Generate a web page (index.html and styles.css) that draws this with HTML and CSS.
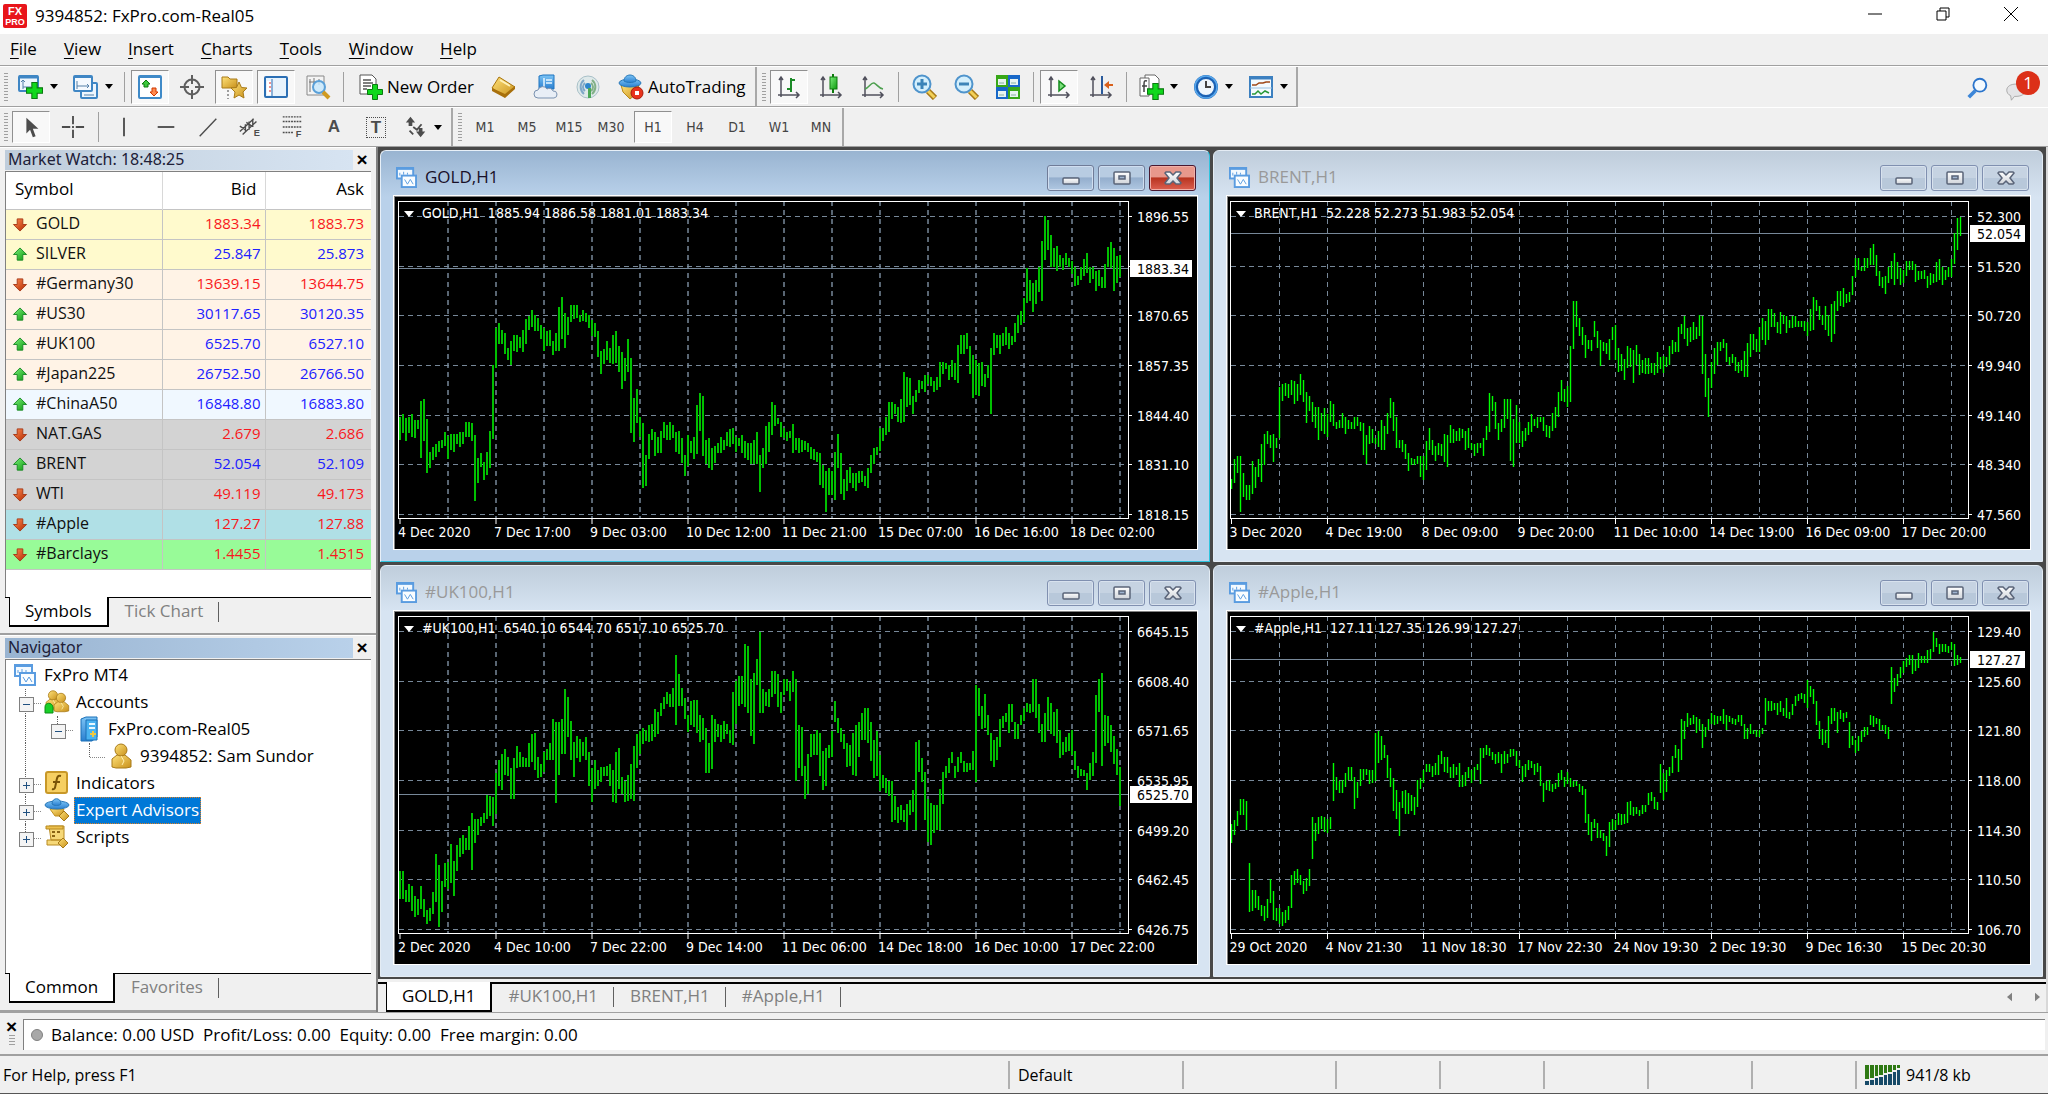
FILE: index.html
```html
<!DOCTYPE html>
<html lang="en">
<head>
<meta charset="utf-8">
<title>9394852: FxPro.com-Real05</title>
<link rel="stylesheet" href="styles.css">
</head>
<body>
<svg class="sprite" aria-hidden="true">
  <defs>
    <linearGradient id="gBlue" x1="0" y1="0" x2="0" y2="1"><stop offset="0" stop-color="#7cc4f5"/><stop offset="1" stop-color="#2a7fd0"/></linearGradient>
    <linearGradient id="gGold" x1="0" y1="0" x2="1" y2="1"><stop offset="0" stop-color="#ffe27a"/><stop offset="1" stop-color="#c8901a"/></linearGradient>
    <linearGradient id="gGreen" x1="0" y1="0" x2="1" y2="1"><stop offset="0" stop-color="#7df07d"/><stop offset="1" stop-color="#0c9a0c"/></linearGradient>
    <linearGradient id="gRed" x1="0" y1="0" x2="1" y2="1"><stop offset="0" stop-color="#ff8a50"/><stop offset="1" stop-color="#b02800"/></linearGradient>
    <linearGradient id="gMetal" x1="0" y1="0" x2="0" y2="1"><stop offset="0" stop-color="#ffffff"/><stop offset="1" stop-color="#d0d4da"/></linearGradient>
  </defs>
  <symbol id="plus" viewBox="0 0 16 16"><path d="M5.500 .5h5v5h5v5h-5v5h-5v-5h-5v-5h5z" fill="#10d81c" stroke="#0a7a10"/></symbol>
  <symbol id="new-chart" viewBox="0 0 26 26"><rect x="1" y="2" width="19" height="15" rx="1" fill="#eef6fd" stroke="#3f86c4" stroke-width="2"/><path d="M1 3h19" stroke="#3f86c4" stroke-width="3"/><path d="M5 6v9M3 8l2-2 2 2M5 13h8" stroke="#5580a8" fill="none"/><use href="#plus" x="8" y="8" width="17" height="17"/></symbol>
  <symbol id="profiles" viewBox="0 0 26 26"><rect x="8" y="9" width="16" height="15" rx="1" fill="#eef6fd" stroke="#3f86c4" stroke-width="2"/><path d="M11 21h10" stroke="#5580a8"/><rect x="1" y="2" width="18" height="15" rx="1" fill="#f4f9fe" stroke="#3f86c4" stroke-width="2"/><path d="M1 3h18" stroke="#3f86c4" stroke-width="2"/><path d="M4 7v8M4 12h12M14 10l2 2-2 2" stroke="#5580a8" fill="none"/></symbol>
  <symbol id="market" viewBox="0 0 26 26"><rect x="2" y="2" width="22" height="22" rx="1" fill="#fff" stroke="#3f8ac8" stroke-width="2"/><path d="M2 3h22" stroke="#3f8ac8" stroke-width="2"/><path d="M9 6l4 4h-2v3H7v-3H5z" fill="#3cc83c" stroke="#0c7a0c"/><path d="M17 22l-4-4h2v-4h4v4h2z" fill="#ff8a50" stroke="#d03800"/></symbol>
  <symbol id="crosshair-box" viewBox="0 0 26 26"><g fill="none" stroke="#5e5e5e" stroke-width="2"><circle cx="13" cy="13" r="7.500"/><path d="M13 1v9M13 16v9M1 13h9M16 13h9"/></g></symbol>
  <symbol id="nav-star" viewBox="0 0 26 26"><path d="M1 3h6l2 2h7v9H1z" fill="url(#gGold)" stroke="#a87a18"/><path d="M7 16v9" stroke="#444" stroke-dasharray="2 2"/><path d="M18 8l2.500 5.500 5.500.5-4 4 1 6-5-3-5 3 1-6-4-4 5.500-.5z" fill="url(#gGold)" stroke="#a87a18"/></symbol>
  <symbol id="data-window" viewBox="0 0 26 26"><rect x="2" y="3" width="22" height="20" rx="1" fill="#e8f3fc" stroke="#2c6fb4" stroke-width="2"/><path d="M4 7h4v14H4z" fill="#fff"/><path d="M6 9h2M6 13h2M6 17h2" stroke="#d22"/><path d="M9 5v17" stroke="#2c6fb4"/></symbol>
  <symbol id="tester" viewBox="0 0 26 26"><path d="M2 2h17v19H2z" fill="#f4f4f4" stroke="#888"/><path d="M5 5v13M9 4v8M14 5v6M4 8h13" stroke="#777"/><circle cx="14" cy="13" r="6" fill="#c8e8fb" fill-opacity=".85" stroke="#5aa0d8" stroke-width="2"/><path d="M18 18l6 6" stroke="#d09a20" stroke-width="4"/></symbol>
  <symbol id="new-order" viewBox="0 0 26 26"><path d="M3 1h12l4 4v15H3z" fill="#fff" stroke="#555"/><path d="M6 6h8M6 9h10M6 12h8M6 15h4" stroke="#555" stroke-width="1.500"/><use href="#plus" x="10" y="10" width="16" height="16"/></symbol>
  <symbol id="ingot" viewBox="0 0 26 26"><path d="M8 3l16 10-10 10L1 14z" fill="url(#gGold)" stroke="#a8740c"/><path d="M1 14l13 6 10-8v3L14 24 1 17z" fill="#a8700c"/><path d="M9 6l10 6" stroke="#fff2b8" stroke-width="2"/></symbol>
  <symbol id="server-cloud" viewBox="0 0 26 26"><path d="M6 2l4-1h11v14H6z" fill="url(#gBlue)" stroke="#1e74c0"/><path d="M11 4v9M13 6h6M13 9h6" stroke="#e8f6ff" stroke-width="1.500"/><path d="M5 24a4 4 0 0 1 0-8 5 5 0 0 1 9-1 4 4 0 0 1 6 2 3.500 3.500 0 0 1 1 7z" fill="#e8eef6" stroke="#7a92b0"/></symbol>
  <symbol id="signals" viewBox="0 0 26 26"><circle cx="13" cy="13" r="11" fill="#dfe9ea" stroke="#a8c0c8"/><g fill="none" stroke-width="2"><path d="M9 20a9 9 0 0 1 0-14M10 17a5 5 0 0 1 0-8" stroke="#7fa8c8"/><path d="M17 6a9 9 0 0 1 0 14M16 9a5 5 0 0 1 0 8" stroke="#82b088"/></g><circle cx="13" cy="12" r="3" fill="#2d86cc"/><path d="M13 14h3v10h-3z" fill="#4ca858"/></symbol>
  <symbol id="autotrade" viewBox="0 0 26 26"><path d="M3 11h18l-3 9-6 5-7-7z" fill="url(#gGold)" stroke="#b88818"/><ellipse cx="12" cy="9" rx="11" ry="4" fill="url(#gBlue)" stroke="#2878b8"/><path d="M6 7c0-8 12-8 12 0-3 2-9 2-12 0z" fill="url(#gBlue)" stroke="#2878b8"/><circle cx="19" cy="19" r="6" fill="#e8331c" stroke="#a81c0c"/><path d="M17 17h4v4h-4z" fill="#fff"/></symbol>
  <symbol id="axes" viewBox="0 0 26 26"><path d="M5 3v20M2 21h21M3 6l2-3 2 3M20 18l3 3-3 3" fill="none" stroke="#50505c" stroke-width="1.500"/></symbol>
  <symbol id="bars" viewBox="0 0 26 26"><use href="#axes" width="26" height="26"/><path d="M15 4v14M15 6h4M11 15h4" stroke="#1c8a28" stroke-width="2"/></symbol>
  <symbol id="candles" viewBox="0 0 26 26"><use href="#axes" width="26" height="26"/><path d="M15 0v19" stroke="#0c7a0c" stroke-width="2"/><rect x="12" y="3" width="7" height="12" fill="url(#gGreen)" stroke="#0c7a0c"/></symbol>
  <symbol id="line" viewBox="0 0 26 26"><use href="#axes" width="26" height="26"/><path d="M5 15c4-1 6-7 9-6s4 5 9 6" fill="none" stroke="#4ea050" stroke-width="1.500"/></symbol>
  <symbol id="zoom-in" viewBox="0 0 26 26"><path d="M17 17l7 7" stroke="#a87a18" stroke-width="6"/><path d="M17 17l6.500 6.500" stroke="#f2d058" stroke-width="3"/><circle cx="11" cy="10" r="8.500" fill="#d4effc" stroke="#4f94cc" stroke-width="2"/><path d="M6 10h10M11 5v10" stroke="#3c84b8" stroke-width="3"/></symbol>
  <symbol id="zoom-out" viewBox="0 0 26 26"><path d="M17 17l7 7" stroke="#a87a18" stroke-width="6"/><path d="M17 17l6.500 6.500" stroke="#f2d058" stroke-width="3"/><circle cx="11" cy="10" r="8.500" fill="#d4effc" stroke="#4f94cc" stroke-width="2"/><path d="M6 10h10" stroke="#3c84b8" stroke-width="3"/></symbol>
  <symbol id="tile" viewBox="0 0 26 26"><path d="M1 1h12v12H1z" fill="#38a818"/><path d="M13 1h12v12H13z" fill="#1868c8"/><path d="M1 13h12v12H1z" fill="#1868c8"/><path d="M13 13h12v12H13z" fill="#38a818"/><path d="M3 5h8v6H3zM15 5h8v6h-8zM3 17h8v6H3zM15 17h8v6h-8z" fill="#e8f4f0"/><path d="M4 9h5M16 9h5M4 21h5M16 21h5" stroke="#88b0a0"/></symbol>
  <symbol id="autoscroll" viewBox="0 0 26 26"><use href="#axes" width="26" height="26"/><path d="M13 7l6 5-6 5z" fill="#7be07b" stroke="#128a1c" stroke-width="1.500"/></symbol>
  <symbol id="shift" viewBox="0 0 26 26"><use href="#axes" width="26" height="26"/><path d="M14 2v18" stroke="#2a5a9c" stroke-width="2"/><path d="M16 11l5-4v3h4v2h-4v3z" fill="#d8601c"/></symbol>
  <symbol id="indicators" viewBox="0 0 26 26"><path d="M7 1h10l4 4v14H7z" fill="#fff" stroke="#666"/><path d="M2 4h9v18H2z" fill="#fff" stroke="#666"/><path d="M9 7c-3-1-3 1-3 4v7M4 12h5" fill="none" stroke="#444" stroke-width="1.500"/><use href="#plus" x="9" y="9" width="17" height="17"/></symbol>
  <symbol id="clock" viewBox="0 0 26 26"><circle cx="13" cy="13" r="10" fill="#eef6fd" stroke="#1c62b4" stroke-width="4"/><circle cx="13" cy="13" r="11" fill="none" stroke="#58a8ec" stroke-width="1.500"/><path d="M13 7v6h5" fill="none" stroke="#444" stroke-width="2"/></symbol>
  <symbol id="template" viewBox="0 0 26 26"><rect x="2" y="3" width="22" height="20" fill="#f4fafe" stroke="#3c80c0" stroke-width="2"/><path d="M2 4h22" stroke="#3c80c0" stroke-width="3"/><path d="M2 14h22" stroke="#9ac0e0"/><path d="M4 11h4l3-2h4l3-1h4" fill="none" stroke="#a04818" stroke-width="1.500"/><path d="M4 20h3l3-3 3 3 4-3 4 2" fill="none" stroke="#289838" stroke-width="1.500"/></symbol>
  <symbol id="cursor" viewBox="0 0 26 26"><path d="M8 3v17l4-4 3 8 3-1-3-8h6z" fill="#4c4c4c"/></symbol>
  <symbol id="cross" viewBox="0 0 26 26"><path d="M13 1v9M13 16v9M1 13h9M16 13h9M13 12v2" stroke="#4c4c4c" stroke-width="2"/></symbol>
  <symbol id="vline" viewBox="0 0 26 26"><path d="M13 3v20" stroke="#4c4c4c" stroke-width="2"/></symbol>
  <symbol id="hline" viewBox="0 0 26 26"><path d="M4 13h18" stroke="#4c4c4c" stroke-width="2"/></symbol>
  <symbol id="trend" viewBox="0 0 26 26"><path d="M4 23L22 4" stroke="#4c4c4c" stroke-width="1.500"/></symbol>
  <symbol id="arrows" viewBox="0 0 26 26"><path d="M7 2l5 6h-3v4H5V8H2zM18 24l-5-6h3v-4h4v4h3z" fill="#4c4c4c"/><path d="M6 17l4 4M10 13l4 3 5-6" fill="none" stroke="#4c4c4c" stroke-width="2"/></symbol>
  <symbol id="search" viewBox="0 0 26 26"><path d="M10 16l-7 7" stroke="#3c86d8" stroke-width="4"/><circle cx="15" cy="10" r="7" fill="#f4faff" stroke="#2a74cc" stroke-width="2"/></symbol>
  <symbol id="bubble" viewBox="0 0 26 26"><path d="M13 4c7 0 12 3 12 8s-5 8-12 8h-2l-4 5-1-6c-3-1-5-4-5-7 0-5 5-8 12-8z" fill="#e4e4e6" stroke="#999"/></symbol>
  <symbol id="chart-doc" viewBox="0 0 22 22"><rect x="1" y="1" width="17" height="11" fill="#f4faff" stroke="#5a9ce0" stroke-width="2"/><path d="M1 2h17" stroke="#5a9ce0" stroke-width="2"/><path d="M4 9V6M8 8V5M12 8V6" stroke="#5a9ce0"/><rect x="6" y="9" width="15" height="12" fill="#fafdff" stroke="#5a9ce0" stroke-width="2"/><path d="M9 13l3 5 3-5 3 5" fill="none" stroke="#5a9ce0"/></symbol>
  <symbol id="up" viewBox="0 0 16 16"><path d="M8 1l7 7h-4v6H5V8H1z" fill="url(#gGreen)" stroke="#1c8a28"/></symbol>
  <symbol id="down" viewBox="0 0 16 16"><path d="M8 15l7-7h-4V2H5v6H1z" fill="url(#gRed)" stroke="#a83a18"/></symbol>
  <symbol id="person" viewBox="0 0 26 26"><path d="M4 24V16l5-4h8l6 5v7l-5 1H8z" fill="url(#gGold)" stroke="#a87a18"/><circle cx="13" cy="7" r="6" fill="url(#gGold)" stroke="#a87a18"/><path d="M13 13l3 5-2 4" fill="none" stroke="#fff0b0"/></symbol>
  <symbol id="people" viewBox="0 0 26 26"><use href="#person" x="-1" y="0" width="20" height="22"/><use href="#person" x="7" y="2" width="20" height="23"/><path d="M1 24v-6c0-5 7-5 8 0v6z" fill="#18d028" stroke="#0a8a14"/></symbol>
  <symbol id="server" viewBox="0 0 26 26"><path d="M5 3l5-2h11v20l-5 4H5z" fill="url(#gBlue)" stroke="#1a70b8"/><path d="M10 4h11v20H10z" fill="#4ab2f0" stroke="#1a70b8"/><path d="M13 8h6M13 12h6" stroke="#e8f8ff" stroke-width="2"/><path d="M16 15h2v2h2v2h-2v2h-2v-2h-2v-2h2z" fill="#f0c840"/></symbol>
  <symbol id="function" viewBox="0 0 26 26"><rect x="2" y="2" width="21" height="21" rx="2" fill="#f6cf62" stroke="#c89828" stroke-width="2"/><path d="M17 6c-4-1-4 2-5 7s-1 7-4 6M9 12h7" fill="none" stroke="#7a5408" stroke-width="2"/></symbol>
  <symbol id="expert" viewBox="0 0 26 26"><path d="M6 12h14l-3 7h-6z" fill="url(#gGold)" stroke="#c09020"/><ellipse cx="13" cy="8" rx="12" ry="4" fill="url(#gBlue)" stroke="#2878b8"/><path d="M8 7c0-7 9-7 9 0-2 2-7 2-9 0z" fill="url(#gBlue)" stroke="#2878b8"/><path d="M20 14l5 5-5 5-5-5z" fill="url(#gGold)" stroke="#a87a18"/></symbol>
  <symbol id="script" viewBox="0 0 26 26"><path d="M5 2h15v14H7zM3 16h15v5H3z" fill="#f6d878" stroke="#b88a20"/><path d="M2 2h17v3H2z" fill="#ecc04c" stroke="#b88a20"/><path d="M8 8h3M13 8h3M8 12h3" stroke="#8a6414" stroke-width="2"/><path d="M19 14l5 5-5 5-5-5z" fill="url(#gGold)" stroke="#a87a18"/></symbol>
  <symbol id="w-min" viewBox="0 0 18 14"><rect x="1" y="7" width="16" height="6" rx="1" fill="url(#gMetal)" stroke="#5a6478" stroke-width="1.500"/></symbol>
  <symbol id="w-max" viewBox="0 0 18 14"><rect x="1" y="1" width="16" height="12" rx="1" fill="url(#gMetal)" stroke="#5a6478" stroke-width="1.500"/><rect x="6" y="5" width="6" height="3" fill="#9fb4d0" stroke="#5a6478" stroke-width="1.500"/></symbol>
  <symbol id="w-close" viewBox="0 0 18 14"><path d="M2 1h4l3 3 3-3h4l1 1-4 5 4 5-1 1h-4l-3-3-3 3H2l-1-1 4-5-4-5z" fill="url(#gMetal)" stroke="#5a6478" stroke-width="1.500"/></symbol>
</svg>

<header class="titlebar">
  <svg class="logo" viewBox="0 0 24 24"><rect width="24" height="24" rx="2" fill="#e8151b"/><text x="12" y="11" class="logo-big">FX</text><text x="12" y="21" class="logo-small">PRO</text></svg>
  <h1>9394852: FxPro.com-Real05</h1>
  <div class="syscontrols">
    <button aria-label="Minimize"><svg viewBox="0 0 16 16"><path d="M1 8h14"/></svg></button>
    <button aria-label="Restore"><svg viewBox="0 0 16 16"><path d="M2 5h9v9H2zM5 5V2h9v9h-3"/></svg></button>
    <button aria-label="Close"><svg viewBox="0 0 16 16"><path d="M1 1l14 14M15 1L1 15"/></svg></button>
  </div>
</header>

<nav class="menubar">
  <button><u>F</u>ile</button><button><u>V</u>iew</button><button><u>I</u>nsert</button><button><u>C</u>harts</button><button><u>T</u>ools</button><button><u>W</u>indow</button><button><u>H</u>elp</button>
</nav>

<div class="toolrow">
  <div class="toolbar">
    <span class="grip"></span>
    <button class="tool drop" aria-label="New chart"><svg><use href="#new-chart"/></svg></button>
    <button class="tool drop" aria-label="Profiles"><svg><use href="#profiles"/></svg></button>
    <span class="sep"></span>
    <button class="tool on" aria-label="Market Watch"><svg><use href="#market"/></svg></button>
    <button class="tool" aria-label="Data window"><svg><use href="#crosshair-box"/></svg></button>
    <button class="tool on" aria-label="Navigator"><svg><use href="#nav-star"/></svg></button>
    <button class="tool on" aria-label="Terminal"><svg><use href="#data-window"/></svg></button>
    <button class="tool" aria-label="Strategy tester"><svg><use href="#tester"/></svg></button>
    <span class="sep"></span>
    <button class="tool wide"><svg><use href="#new-order"/></svg>New Order</button>
    <button class="tool" aria-label="MetaEditor"><svg><use href="#ingot"/></svg></button>
    <button class="tool" aria-label="Hosting"><svg><use href="#server-cloud"/></svg></button>
    <button class="tool" aria-label="Signals"><svg><use href="#signals"/></svg></button>
    <button class="tool wide"><svg><use href="#autotrade"/></svg>AutoTrading</button>
  </div>
  <div class="toolbar">
    <span class="grip"></span>
    <button class="tool on" aria-label="Bar chart"><svg><use href="#bars"/></svg></button>
    <button class="tool" aria-label="Candlesticks"><svg><use href="#candles"/></svg></button>
    <button class="tool" aria-label="Line chart"><svg><use href="#line"/></svg></button>
    <span class="sep"></span>
    <button class="tool" aria-label="Zoom in"><svg><use href="#zoom-in"/></svg></button>
    <button class="tool" aria-label="Zoom out"><svg><use href="#zoom-out"/></svg></button>
    <button class="tool" aria-label="Tile windows"><svg><use href="#tile"/></svg></button>
    <span class="sep"></span>
    <button class="tool on" aria-label="Auto scroll"><svg><use href="#autoscroll"/></svg></button>
    <button class="tool" aria-label="Chart shift"><svg><use href="#shift"/></svg></button>
    <span class="sep"></span>
    <button class="tool drop" aria-label="Indicators"><svg><use href="#indicators"/></svg></button>
    <button class="tool drop" aria-label="Periods"><svg><use href="#clock"/></svg></button>
    <button class="tool drop" aria-label="Templates"><svg><use href="#template"/></svg></button>
  </div>
  <div class="quick">
    <button aria-label="Search"><svg><use href="#search"/></svg></button>
    <button class="notify" aria-label="Notifications"><svg><use href="#bubble"/></svg><span class="badge">1</span></button>
  </div>
</div>

<div class="toolrow second">
  <div class="toolbar">
    <span class="grip"></span>
    <button class="tool on" aria-label="Cursor"><svg><use href="#cursor"/></svg></button>
    <button class="tool" aria-label="Crosshair"><svg><use href="#cross"/></svg></button>
    <span class="sep"></span>
    <button class="tool" aria-label="Vertical line"><svg><use href="#vline"/></svg></button>
    <button class="tool" aria-label="Horizontal line"><svg><use href="#hline"/></svg></button>
    <button class="tool" aria-label="Trendline"><svg><use href="#trend"/></svg></button>
    <button class="tool" aria-label="Channel"><svg viewBox="0 0 26 26"><path d="M2 18L17 4M5 21L20 7M8 10v9M12 7v9M16 4v9M2 12l6 4M9 8l6 4" stroke="#4c4c4c" stroke-width="1.500"/><text x="17" y="23" class="icon-letter">E</text></svg></button>
    <button class="tool" aria-label="Fibonacci"><svg viewBox="0 0 26 26"><path d="M3 2h20M3 7h20M3 13h20M3 19h12" stroke="#4c4c4c" stroke-width="1.500" stroke-dasharray="2 1"/><text x="17" y="24" class="icon-letter">F</text></svg></button>
    <button class="tool" aria-label="Text"><span class="icon-char">A</span></button>
    <button class="tool" aria-label="Text label"><span class="icon-char boxed">T</span></button>
    <button class="tool drop" aria-label="Arrows"><svg><use href="#arrows"/></svg></button>
  </div>
  <div class="toolbar">
    <span class="grip"></span>
    <button class="tool">M1</button><button class="tool">M5</button><button class="tool">M15</button><button class="tool">M30</button><button class="tool on">H1</button><button class="tool">H4</button><button class="tool">D1</button><button class="tool">W1</button><button class="tool">MN</button>
  </div>
</div>

<main class="workspace">
  <aside class="docks">
    <section class="dock">
      <header class="dock-head idle"><h2>Market Watch: 18:48:25</h2><button aria-label="Close">×</button></header>
      <div class="dock-body">
        <table class="quotes">
          <thead><tr><th>Symbol</th><th>Bid</th><th>Ask</th></tr></thead>
          <tbody>
            <tr class="metal down"><td><svg><use href="#down"/></svg>GOLD</td><td>1883.34</td><td>1883.73</td></tr>
            <tr class="metal up"><td><svg><use href="#up"/></svg>SILVER</td><td>25.847</td><td>25.873</td></tr>
            <tr class="index down"><td><svg><use href="#down"/></svg>#Germany30</td><td>13639.15</td><td>13644.75</td></tr>
            <tr class="index up"><td><svg><use href="#up"/></svg>#US30</td><td>30117.65</td><td>30120.35</td></tr>
            <tr class="index up"><td><svg><use href="#up"/></svg>#UK100</td><td>6525.70</td><td>6527.10</td></tr>
            <tr class="index up"><td><svg><use href="#up"/></svg>#Japan225</td><td>26752.50</td><td>26766.50</td></tr>
            <tr class="china up"><td><svg><use href="#up"/></svg>#ChinaA50</td><td>16848.80</td><td>16883.80</td></tr>
            <tr class="energy down"><td><svg><use href="#down"/></svg>NAT.GAS</td><td>2.679</td><td>2.686</td></tr>
            <tr class="energy up"><td><svg><use href="#up"/></svg>BRENT</td><td>52.054</td><td>52.109</td></tr>
            <tr class="energy down"><td><svg><use href="#down"/></svg>WTI</td><td>49.119</td><td>49.173</td></tr>
            <tr class="us down"><td><svg><use href="#down"/></svg>#Apple</td><td>127.27</td><td>127.88</td></tr>
            <tr class="uk down"><td><svg><use href="#down"/></svg>#Barclays</td><td>1.4455</td><td>1.4515</td></tr>
          </tbody>
        </table>
      </div>
      <div class="tabs"><button class="active">Symbols</button><button>Tick Chart</button></div>
    </section>
    <section class="dock grow">
      <header class="dock-head"><h2>Navigator</h2><button aria-label="Close">×</button></header>
      <div class="dock-body">
        <ul class="tree">
          <li><svg><use href="#chart-doc"/></svg><span>FxPro MT4</span></li>
          <li><i class="guide v node minus"></i><svg><use href="#people"/></svg><span>Accounts</span></li>
          <li><i class="guide v"></i><i class="guide half node minus"></i><svg><use href="#server"/></svg><span>FxPro.com-Real05</span></li>
          <li><i class="guide v"></i><i class="guide"></i><i class="guide half elbow"></i><svg><use href="#person"/></svg><span>9394852: Sam Sundor</span></li>
          <li><i class="guide v node plus"></i><svg><use href="#function"/></svg><span>Indicators</span></li>
          <li><i class="guide v node plus"></i><svg><use href="#expert"/></svg><span class="selected">Expert Advisors</span></li>
          <li><i class="guide half node plus"></i><svg><use href="#script"/></svg><span>Scripts</span></li>
        </ul>
      </div>
      <div class="tabs"><button class="active">Common</button><button>Favorites</button></div>
    </section>
  </aside>

  <section class="desk">
    <div class="mdi">
      <article class="window active">
        <header><svg class="doc"><use href="#chart-doc"/></svg><h2>GOLD,H1</h2><div class="wbtns"><button aria-label="Minimize"><svg><use href="#w-min"/></svg></button><button aria-label="Maximize"><svg><use href="#w-max"/></svg></button><button class="x" aria-label="Close"><svg><use href="#w-close"/></svg></button></div></header>
        <div class="chart wide" data-series="gold"></div>
      </article>
      <article class="window">
        <header><svg class="doc"><use href="#chart-doc"/></svg><h2>BRENT,H1</h2><div class="wbtns"><button aria-label="Minimize"><svg><use href="#w-min"/></svg></button><button aria-label="Maximize"><svg><use href="#w-max"/></svg></button><button class="x" aria-label="Close"><svg><use href="#w-close"/></svg></button></div></header>
        <div class="chart" data-series="brent"></div>
      </article>
      <article class="window">
        <header><svg class="doc"><use href="#chart-doc"/></svg><h2>#UK100,H1</h2><div class="wbtns"><button aria-label="Minimize"><svg><use href="#w-min"/></svg></button><button aria-label="Maximize"><svg><use href="#w-max"/></svg></button><button class="x" aria-label="Close"><svg><use href="#w-close"/></svg></button></div></header>
        <div class="chart wide" data-series="uk"></div>
      </article>
      <article class="window">
        <header><svg class="doc"><use href="#chart-doc"/></svg><h2>#Apple,H1</h2><div class="wbtns"><button aria-label="Minimize"><svg><use href="#w-min"/></svg></button><button aria-label="Maximize"><svg><use href="#w-max"/></svg></button><button class="x" aria-label="Close"><svg><use href="#w-close"/></svg></button></div></header>
        <div class="chart" data-series="apple"></div>
      </article>
    </div>
    <div class="tabs chart-tabs">
      <button class="active">GOLD,H1</button><button>#UK100,H1</button><button>BRENT,H1</button><button>#Apple,H1</button>
      <span class="scrollers"><button aria-label="Scroll left"><svg viewBox="0 0 6 10"><path d="M6 0v10L0 5z"/></svg></button><button aria-label="Scroll right"><svg viewBox="0 0 6 10"><path d="M0 0v10l6-5z"/></svg></button></span>
    </div>
  </section>
</main>

<section class="terminal">
  <div class="terminal-side"><button aria-label="Close">×</button><span class="mini-grip"></span></div>
  <p><i class="dot"></i><span>Balance: 0.00 USD&nbsp; Profit/Loss: 0.00&nbsp; Equity: 0.00&nbsp; Free margin: 0.00</span></p>
</section>

<footer class="status">
  <span class="help">For Help, press F1</span>
  <span class="profile">Default</span>
  <span class="c1"></span><span class="c2"></span><span class="c2"></span><span class="c2"></span><span class="c2"></span><span class="c2"></span>
  <span class="traffic"><svg viewBox="0 0 36 20"><g fill="#2f7a14"><path d="M0 0h4v14H0zM5 0h4v13H5zM10 0h3v11h-3zM14 0h4v10h-4zM19 0h3v8h-3zM23 0h4v7h-4zM28 0h3v5h-3zM32 0h3v3h-3z"/></g><g fill="#174a68"><path d="M0 16h4v4H0zM5 15h4v5H5zM10 13h3v7h-3zM14 12h4v8h-4zM19 10h3v10h-3zM23 9h4v11h-4zM28 7h3v13h-3zM32 5h3v15h-3z"/></g></svg>941/8 kb</span>
</footer>
<script src="charts.js"></script>
</body>
</html>
```
FILE: styles.css
```css
* { box-sizing: border-box; }
html, body { height: 100%; }
body {
  margin: 0;
  display: flex;
  flex-direction: column;
  background: #f0f0f0;
  color: #000;
  font: 17px/20px "Open Sans", "Noto Sans", sans-serif;
  overflow: hidden;
  border-bottom: 1px solid #555;
}
button { font: inherit; color: inherit; background: none; border: 0; padding: 0; margin: 0; }
h1, h2, p, ul { margin: 0; padding: 0; font: inherit; }
.sprite { position: absolute; width: 0; height: 0; }
.icon-letter { font: bold 10px "Liberation Sans", sans-serif; fill: #4c4c4c; }
.icon-char { font: bold 17px/20px "Liberation Sans", sans-serif; color: #4c4c4c; }
.boxed { width: 20px; height: 21px; border: 1px dotted #4c4c4c; }

/* title and menu */
.titlebar { display: flex; align-items: center; gap: 8px; flex: 0 0 34px; background: #fff; padding: 0 3px 2px; }
.logo { width: 24px; height: 24px; }
.logo-big, .logo-small { font: bold 11px "Liberation Sans", sans-serif; fill: #fff; text-anchor: middle; }
.logo-small { font-size: 9px; }
.syscontrols { margin-left: auto; display: flex; }
.syscontrols button { width: 68px; height: 32px; }
.syscontrols svg { width: 16px; height: 16px; fill: none; stroke: #000; stroke-width: 1; }
.menubar { display: flex; gap: 27px; flex: 0 0 32px; padding: 0 0 2px 10px; align-items: center; border-bottom: 1px solid #a0a0a0; }
.menubar u { text-underline-offset: 3px; }

/* toolbars */
.toolrow { display: flex; flex: 0 0 41px; border-top: 1px solid #fff; }
.toolbar { display: flex; align-items: center; height: 40px; padding-left: 4px; border-right: 2px solid #a8a8a8; border-bottom: 1px solid #a0a0a0; box-shadow: 0 1px #fff; }
.toolbar + .toolbar { padding-left: 5px; }
.second { flex-basis: 40px; border-bottom: 1px solid #a0a0a0; }
.second .toolbar { border-bottom: 0; height: 38px; box-shadow: none; padding-right: 2px; }
.second .toolbar + .toolbar { padding-right: 0; }
.grip { width: 4px; height: 28px; margin-right: 2px; background: repeating-linear-gradient(#a0a0a0 0 1px, #f0f0f0 1px 3px); }
.sep { width: 1px; height: 30px; background: #a0a0a0; margin: 0 4px; }
.tool { display: flex; align-items: center; justify-content: center; width: 38px; height: 34px; margin: 0 2px; white-space: nowrap; }
.tool svg { width: 26px; height: 26px; flex: none; }
.tool.on { background: #f8f8f8; border: 1px solid; border-color: #909090 #fff #fff #909090; }
.tool.wide { width: auto; gap: 4px; padding: 0 7px; }
.tool.drop { width: 51px; gap: 6px; }
.tool.drop::after { content: ""; border: 4px solid transparent; border-top: 5px solid #000; border-bottom: 0; }
.second .tool { height: 32px; font: 14px "DejaVu Sans Condensed", "Noto Sans", sans-serif; color: #444; }
.second .tool svg { width: 24px; height: 24px; }
.second .tool.drop { width: 48px; }
.quick { margin-left: auto; display: flex; gap: 16px; padding: 6px 8px 0 0; }
.quick svg { width: 24px; height: 24px; }
.notify { position: relative; width: 34px; text-align: left; }
.notify svg { width: 20px; margin-top: 6px; }
.badge { position: absolute; right: 0; top: -2px; width: 24px; height: 24px; border-radius: 12px; background: #dc3018; color: #fff; text-align: center; line-height: 24px; }

/* docked panels */
.workspace { flex: 1; display: flex; min-height: 0; }
.docks { display: flex; flex-direction: column; width: 378px; border-right: 2px solid #808080; }
.dock { display: flex; flex-direction: column; padding: 2px 5px 6px 5px; border-bottom: 2px solid #a0a0a0; border-top: 1px solid #fff; }
.dock.grow { flex: 1; padding-bottom: 7px; }
.dock-head { display: flex; height: 20px; font: 16px/18px "Noto Sans", sans-serif; color: #202038; }
.dock-head h2 { flex: 1; padding-left: 3px; background: linear-gradient(90deg, #99b4d1, #b9d1ea); }
.dock-head.idle h2 { background: linear-gradient(90deg, #bfcddb, #d7e4f2); }
.dock-head button, .terminal-side button { width: 18px; font: bold 19px/18px "Liberation Sans", sans-serif; color: #000; }
.dock-body { flex: 1; background: #fff; margin-top: 1px; border-top: 1px solid #808080; border-left: 1px solid #808080; }
.quotes { width: 100%; border-collapse: collapse; table-layout: fixed; margin-bottom: 27px; }
.quotes th { height: 37px; font-weight: 400; text-align: right; padding: 0 8px 2px 0; border-right: 1px solid #d8d8d8; }
.quotes th:first-child { text-align: left; padding-left: 9px; width: 156px; }
.quotes th:nth-child(2) { width: 103px; }
.quotes td { height: 30px; padding: 0 4px 2px 0; text-align: right; border: 1px solid #c4c4c4; border-left: 0; font-size: 15px; }
.quotes td:first-child { text-align: left; color: #101010; padding-left: 6px; font-size: 16px; }
.quotes td:first-child svg { width: 16px; height: 15px; margin-right: 8px; vertical-align: -3px; }
.quotes td:last-child, .quotes th:last-child { padding-right: 7px; border-right: 0; }
.metal { background: #fffacd; }
.index { background: #fff3e6; }
.china { background: #f0f8ff; }
.energy { background: #d3d3d3; }
.us { background: #b0e0e6; }
.uk { background: #98fb98; }
tr.up { color: #2020ff; }
tr.down { color: #f81820; }

.tabs { display: flex; align-items: stretch; height: 30px; padding-left: 4px; position: relative; }
.tabs::before { content: ""; position: absolute; left: 0; right: 0; top: 0; border-top: 1px solid #000; }
.tabs > button { color: #808080; padding: 0 16px 2px; position: relative; }
.tabs > button:not(.active)::after { content: ""; position: absolute; right: 0; top: 5px; height: 20px; border-right: 1px solid #606060; }
.tabs > button.active { color: #000; background: #fff; border: solid #000; border-width: 0 2px 2px 1px; padding: 0 15px; }

.tree { list-style: none; padding: 2px 0 0 3px; }
.tree li { display: flex; align-items: center; height: 27px; }
.tree svg { width: 26px; height: 26px; margin: 0 3px; }
.tree li:first-child svg { width: 22px; height: 22px; margin: 0 5px; }
.tree span { padding: 2px 1px 3px; border: 1px solid transparent; margin-left: 1px; }
.tree .selected { background: #0078d7; color: #fff; border: 1px dotted #e08020; }
.guide { position: relative; width: 32px; height: 27px; }
.guide.v::before, .guide.half::before { content: ""; position: absolute; left: 16px; top: 0; height: 27px; border-left: 1px dotted #606060; }
.guide.half::before { height: 14px; }
.node, .elbow { background: linear-gradient(90deg, #888 50%, transparent 0) 0 14px / 2px 1px repeat-x; background-clip: content-box; background-origin: content-box; padding-left: 17px; }
.node::after { content: ""; position: absolute; left: 10px; top: 8px; width: 13px; height: 13px; border: 1px solid #808080; background: linear-gradient(#205080, #205080) center / 7px 1px no-repeat, linear-gradient(#f4f4f4, #f4f4f4); }
.node.plus::after { background: linear-gradient(#205080, #205080) center / 7px 1px no-repeat, linear-gradient(#205080, #205080) center / 1px 7px no-repeat, linear-gradient(#f4f4f4, #f4f4f4); }

/* chart windows */
.desk { flex: 1; display: flex; flex-direction: column; min-width: 0; border-right: 2px solid #d8d8d8; }
.mdi { flex: 1; min-height: 0; display: grid; grid-template: 1fr 1fr / 1fr 1fr; gap: 3px; background: #484848; padding: 3px 3px 2px 2px; margin-bottom: 3px; }
.window { display: flex; flex-direction: column; min-width: 0; min-height: 0; padding: 0 12px 12px 13px; border: 1px solid #e4ecf4; border-radius: 6px 6px 0 0; background: linear-gradient(#bfcddb, #d7e4f2 46px); color: #999; }
.window.active { background: linear-gradient(#99b4d1, #b9d1ea 46px); color: #181028; border-color: #e8f0f8 #2ec4de #2ec4de #e8f0f8; }
.window header { flex: 0 0 45px; display: flex; align-items: center; padding: 8px 1px 0 2px; }
.window h2 { padding: 0 0 2px 8px; }
.doc { width: 21px; height: 21px; }
.wbtns { display: flex; gap: 4px; margin-left: auto; }
.wbtns button { display: grid; place-items: center; width: 47px; height: 26px; border: 1px solid #8090b0; border-radius: 3px; background: linear-gradient(#c6d3e2 50%, #b8c8da 50%); box-shadow: inset 0 0 0 1px #d8e2ee; }
.wbtns svg { width: 18px; height: 14px; }
.active .wbtns button { border-color: #707c98; background: linear-gradient(#b8cce2 45%, #94aecd 50%, #b0c8e2); box-shadow: inset 0 0 0 1px #d0def0; }
.active .wbtns .x { border-color: #4a1830; background: linear-gradient(#e8988c 45%, #b83420 50%, #dc6050); box-shadow: inset 0 0 0 1px #f0b0a8; }
.chart { flex: 1; min-height: 0; background: #000; outline: 1px solid #fff; border-top: 1px solid #808080; border-left: 1px solid #808080; overflow: hidden; }
.chart svg { display: block; }
.chart text { font: 14px "DejaVu Sans Condensed", "Noto Sans", sans-serif; fill: #fff; white-space: pre; }
.chart .tag-text { fill: #000; }
.chart .frame { fill: none; stroke: #fff; }
.chart .tick { stroke: #fff; }
.chart .grid { stroke: #778899; stroke-dasharray: 5 4; }
.chart .last { stroke: #778899; }
.chart .bars { stroke: #00ff00; stroke-width: 1.4; fill: none; }
.chart.wide .bars { stroke: #00c000; stroke-width: 2; }
.chart.wide .grid.vertical { stroke: #596673; stroke-width: 2; }
.chart .solid { fill: #fff; }

.chart-tabs { height: 30px; flex: none; padding-left: 8px; }
.chart-tabs::before { border-top-width: 2px; }
.scrollers { margin: 0 6px 0 auto; display: flex; gap: 23px; align-items: center; }
.scrollers svg { display: block; width: 5px; height: 10px; fill: #808080; }

/* terminal and status bar */
.terminal { display: flex; flex: 0 0 44px; border-top: 1px solid #a0a0a0; border-bottom: 2px solid #a0a0a0; padding: 6px 3px 4px 0; }
.terminal-side { width: 23px; display: flex; flex-direction: column; align-items: center; }
.terminal-side button { line-height: 16px; }
.mini-grip { width: 6px; height: 11px; background: repeating-linear-gradient(#a0a0a0 0 1px, #f0f0f0 1px 3px); }
.terminal p { flex: 1; display: flex; align-items: center; gap: 8px; background: #fff; border-top: 1px solid #808080; border-left: 1px solid #808080; padding-left: 7px; }
.dot { width: 12px; height: 12px; border-radius: 6px; background: #a8a8a8; border: 1px solid #808080; }
.status { display: flex; align-items: center; flex: 0 0 37px; font-size: 16px; }
.status span { height: 28px; line-height: 28px; padding-left: 8px; border-left: 2px solid #b0b0b0; }
.status .help { flex: 1; border: 0; padding-left: 3px; }
.status .profile { width: 174px; }
.status .c1 { width: 153px; }
.status .c2 { width: 104px; }
.status .traffic { width: 193px; display: flex; align-items: center; gap: 5px; }
.traffic svg { width: 36px; height: 20px; }
```
FILE: charts.js
```js
// Each bar is "high-low", measured downwards in chart units; the plot is 948 units tall.
const SERIES = {
  gold: {
    title: 'GOLD,H1  1885.94 1886.58 1881.01 1883.34', axis: 69, origin: 170, last: 369, lastText: '1883.34',
    prices: ['1896.55', '', '1870.65', '1857.35', '1844.40', '1831.10', '1818.15'],
    times: ['4 Dec 2020', '7 Dec 17:00', '9 Dec 03:00', '10 Dec 12:00', '11 Dec 21:00', '15 Dec 07:00', '16 Dec 16:00', '18 Dec 02:00'],
    bars: `815-885 808-865 820-888 815-865 808-875 825-880 825-852 767-938 762-888 822-983 920-968 906-946 897-935 888-920 884-910 862-902
872-942 866-915 866-920 866-897 862-906 862-897 830-875 830-875 835-888 870-1068 938-1014 924-965 952-1005 920-988 857-969 660-883
550-670 534-597 556-597 565-627 610-645 588-660 570-618 570-623 578-610 556-623 524-597 514-556 497-546 510-560 520-560 542-582
550-618 560-605 556-605 588-632 565-618 488-618 457-582 506-609 516-570 480-532 480-524 480-520 510-532 497-528 506-532 512-550
525-575 534-578 560-636 618-686 614-658 588-645 610-654 570-658 560-654 605-681 623-731 640-708 583-681 641-865 758-892 731-834
817-875 834-1028 930-1023 866-942 852-884 862-934 876-924 857-924 830-880 840-884 830-884 840-880 862-920 857-928 880-955 930-992
870-963 888-924 876-942 780-928 744-857 753-934 884-958 880-969 910-974 902-955 893-924 876-924 884-915 862-902 852-906 848-897
875-920 880-902 870-924 888-938 893-946 893-956 884-956 862-956 930-1041 910-969 844-956 830-920 771-870 780-844 820-838 830-875
848-880 862-888 857-880 838-924 880-915 880-924 884-920 888-915 893-920 906-942 911-946 920-951 924-1019 960-1028 978-1100 969-1050
978-1050 920-1064 866-969 924-1046 1000-1064 974-1036 965-1014 983-1028 983-1037 978-1014 978-1010 992-1023 969-1028 929-983 910-956 906-929
848-918 848-888 816-870 771-862 771-821 776-808 785-830 762-834 682-830 695-785 700-780 753-808 735-771 704-744 708-731 690-740
690-718 695-722 708-740 695-735 650-726 650-686 654-672 660-704 645-695 654-704 600-713 570-627 570-627 565-614 605-686 632-758
645-749 654-753 650-722 686-726 660-700 610-808 565-632 570-609 570-627 565-605 546-600 565-614 574-600 534-591 510-565 500-542
460-532 370-475 407-470 415-501 407-479 366-443 290-470 216-345 227-317 272-366 312-366 304-378 330-366 340-375 326-362 340-366
348-388 366-425 393-420 366-407 344-393 326-384 366-416 366-402 380-438 375-425 398-430 357-430 308-366 294-370 312-438 335-416 330-398`
  },
  brent: {
    title: 'BRENT,H1  52.228 52.273 51.983 52.054', axis: 62, origin: 170, last: 265, lastText: '52.054',
    prices: ['52.300', '51.520', '50.720', '49.940', '49.140', '48.340', '47.560'],
    times: ['3 Dec 2020', '4 Dec 19:00', '8 Dec 09:00', '9 Dec 20:00', '11 Dec 10:00', '14 Dec 19:00', '16 Dec 09:00', '17 Dec 20:00'],
    bars: `1000-1032 942-1014 934-983 934-1100 983-1055 1019-1064 1019-1064 947-1046 965-1028 942-996 897-1010 866-960 857-897 870-910 866-951 880-910
727-880 717-767 713-753 717-758 704-749 708-776 717-767 686-749 704-771 740-834 753-798 771-830 785-848 785-884 803-857 790-866
808-875 767-830 776-844 830-852 825-848 803-848 816-866 825-852 830-852 817-852 816-844 830-857 834-929 870-956 844-897 852-893
880-897 857-906 825-915 844-915 803-866 758-820 771-857 816-910 884-910 884-920 897-942 924-978 938-960 942-960 934-956 934-996
934-1005 888-974 848-915 884-929 902-947 893-929 897-934 866-951 870-965 840-893 852-893 857-888 848-888 852-880 857-915 848-910
893-915 897-934 893-924 893-910 880-934 844-884 744-862 753-798 771-852 834-884 821-862 762-848 762-821 762-947 821-965 780-893
830-893 857-906 848-888 830-870 808-862 821-844 816-848 816-830 816-857 840-875 844-880 803-857 785-848 740-816 704-767 731-771
722-785 605-771 470-614 470-546 520-574 546-600 570-641 587-614 587-618 528-578 560-609 587-663 591-618 596-627 583-645 546-587
542-645 609-681 627-677 642-705 605-669 609-665 615-714 601-660 628-690 645-683 641-687 641-687 655-683 655-690 623-683 637-672
633-685 637-665 605-660 587-627 591-623 547-623 538-569 515-582 551-605 547-591 533-587 547-582 511-573 513-687 627-757 700-815
650-730 609-687 591-660 591-619 582-610 595-651 637-660 627-655 637-677 650-683 645-677 618-695 595-695 569-637 569-615 582-623
547-623 520-587 529-600 492-587 492-547 505-547 533-565 502-569 511-538 515-565 525-551 515-551 515-547 529-547 529-547 529-560
533-573 493-560 457-555 465-498 483-525 511-542 483-555 511-573 479-591 470-569 438-498 438-483 429-487 447-475 443-473 393-451
339-397 339-375 366-380 339-380 339-370 312-362 299-362 330-393 380-425 398-430 393-447 366-415 348-402 325-420 353-402 370-420
375-415 348-393 348-375 348-375 357-411 380-406 380-402 375-402 393-429 384-420 389-415 353-411 344-406 366-420 375-406 366-397
343-397 265-357 221-317 217-275`
  },
  uk: {
    title: '#UK100,H1  6540.10 6544.70 6517.10 6525.70', axis: 69, origin: 172, last: 704, lastText: '6525.70',
    prices: ['6645.15', '6608.40', '6571.65', '6535.95', '6499.20', '6462.45', '6426.75'],
    times: ['2 Dec 2020', '4 Dec 10:00', '7 Dec 22:00', '9 Dec 14:00', '11 Dec 06:00', '14 Dec 18:00', '16 Dec 10:00', '17 Dec 22:00'],
    bars: `936-1017 936-1017 992-1026 974-1026 980-1053 1010-1071 1019-1066 980-1048 1017-1071 1050-1093 1044-1084 998-1062 885-1026 918-1102 965-1057 912-983
908-987 855-970 905-1008 857-936 836-894 827-885 836-872 800-872 760-931 778-850 778-827 773-800 760-791 706-778 710-769 714-800
641-765 603-679 585-692 570-647 594-650 628-719 598-719 562-628 580-625 594-625 598-625 553-625 526-610 522-634 594-656 614-652
580-640 570-603 553-603 481-603 490-732 490-647 481-585 391-585 413-535 486-603 549-652 530-598 540-610 548-590 535-602 580-679
628-728 603-688 634-679 625-668 625-650 620-650 616-679 634-728 580-732 567-688 652-705 665-728 648-724 616-719 562-724 526-628
517-585 508-556 512-546 499-550 495-546 450-535 458-526 432-470 413-450 400-434 405-445 387-445 288-499 346-440 387-440 418-481
468-520 427-499 423-503 423-521 468-548 477-544 508-643 553-643 468-630 481-548 494-535 499-548 486-540 495-526 512-553 400-558
365-495 350-440 350-436 256-445 262-463 360-530 342-556 300-377 220-463 391-463 400-440 391-445 337-413 337-405 346-445 400-463
360-407 360-396 368-427 337-400 360-664 499-628 503-651 621-719 584-703 526-593 526-588 514-588 523-651 575-692 566-680 557-597
517-593 427-490 477-521 508-549 526-570 553-624 557-621 521-647 499-651 490-593 462-543 446-543 446-553 490-606 543-656 517-651
588-695 647-685 656-702 664-710 666-787 710-782 742-790 738-782 751-787 733-813 723-768 693-759 549-812 544-638 598-669 639-782
720-848 732-858 738-822 738-813 689-813 639-733 621-656 598-642 580-611 621-656 593-638 580-611 607-638 611-638 611-634 575-634
378-669 387-471 441-511 405-508 468-529 521-606 544-624 534-602 481-565 472-508 463-490 436-521 436-490 490-540 495-540 468-499
446-485 431-459 436-463 360-459 360-476 436-521 495-548 463-548 414-512 431-526 459-530 450-553 512-598 548-589 534-579 521-575
514-588 575-634 621-656 629-651 634-651 642-692 611-661 580-651 409-611 360-459 342-621 468-562 472-552 499-579 530-616 570-647 625-741`
  },
  apple: {
    title: '#Apple,H1  127.11 127.35 126.99 127.27', axis: 62, origin: 172, last: 302, lastText: '127.27',
    prices: ['129.40', '125.60', '121.80', '118.00', '114.30', '110.50', '106.70'],
    times: ['29 Oct 2020', '4 Nov 21:30', '11 Nov 18:30', '17 Nov 22:30', '24 Nov 19:30', '2 Dec 19:30', '9 Dec 16:30', '15 Dec 20:30'],
    bars: `795-850 782-828 756-800 720-768 720-768 724-812 912-1057 992-1053 990-1044 1008-1050 1035-1068 1040-1084 1017-1075 960-1030 994-1080 1044-1084
1044-1093 1057-1098 1050-1089 1039-1080 948-1044 936-975 930-970 947-975 965-1003 956-993 930-980 773-900 792-845 773-823 769-809 773-817
778-820 773-809 611-724 652-692 665-700 661-700 643-683 625-661 625-665 652-750 668-715 630-679 630-661 630-648 634-674 634-670
523-665 515-611 531-602 558-598 589-656 628-683 657-755 692-778 728-831 696-746 692-765 700-765 706-755 714-768 661-742 656-688
634-672 616-638 616-638 620-652 611-647 589-647 576-615 594-640 594-643 625-656 616-656 625-647 611-683 648-683 638-679 625-656
634-670 625-661 614-634 567-674 567-598 558-588 567-592 580-602 585-615 580-611 585-643 576-615 585-611 570-594 570-592 576-620
603-628 620-668 616-652 603-634 606-628 616-647 611-640 621-679 670-728 665-692 661-694 674-697 670-688 643-684 634-661 652-683
640-674 656-683 665-683 665-679 674-697 679-706 688-791 765-827 787-845 778-805 791-836 813-836 822-845 831-890 787-863 778-812
782-812 760-796 765-798 764-795 729-792 724-766 743-769 743-764 751-769 738-764 738-758 702-738 697-725 712-748 729-751 616-702
642-723 634-697 625-650 590-642 559-598 571-639 481-602 485-540 463-504 476-499 468-495 473-521 481-512 495-566 504-534 481-512
463-496 468-499 472-496 472-485 450-495 468-512 472-490 476-495 481-499 468-490 468-501 495-540 508-540 496-526 512-526 514-534
512-534 508-526 417-498 427-455 427-455 431-454 431-467 427-459 446-472 417-476 459-481 436-468 410-441 405-427 401-419 405-431
363-448 382-414 391-436 427-499 485-540 511-557 512-553 472-566 446-495 446-485 459-521 454-481 463-490 459-476 490-566 530-557
544-582 530-575 517-549 504-534 504-529 468-499 472-503 476-495 481-514 499-514 499-526 503-540 324-436 356-398 345-382 324-356
307-342 297-324 288-319 288-345 303-337 283-327 292-313 292-313 273-313 270-301 219-279 237-266 256-286 256-279 256-279 261-283
251-274 256-323 288-319 296-314`
  }
};

const UNITS = 948, PITCH = 3, GRID = 48, TOP = 4, BOTTOM = 31;

function draw(box) {
  const s = SERIES[box.dataset.series];
  const w = box.clientWidth, h = box.clientHeight;
  const wide = box.classList.contains('wide');
  const left = wide ? 3 : 2;
  const right = w - s.axis, base = h - BOTTOM, plot = base - TOP;
  const x0 = wide ? left + 2 : left + 1.5;
  const y = u => Math.round((u - s.origin) / UNITS * plot) + TOP;
  let out = '', v = '', hz = '', ticks = '', bars = '', text = '';

  for (let x = x0 + GRID; x < right; x += GRID) v += `M${x} ${TOP}V${base}`;
  s.prices.forEach((p, i) => {
    const gy = y(s.origin + 45 + i * 148.6) + 0.5;
    hz += `M${left + 1} ${gy}H${right}`;
    ticks += `M${right} ${gy}h4`;
    if (p) text += `<text x="${right + 9}" y="${gy + 5}">${p}</text>`;
  });
  s.times.forEach((t, i) => {
    const x = x0 + i * GRID * 2;
    ticks += `M${x} ${base}v6`;
    text += `<text x="${x - 2}" y="${base + 19}">${t}</text>`;
  });
  s.bars.trim().split(/\s+/).forEach((b, i) => {
    const [hi, lo] = b.split('-').map(Number);
    bars += `M${x0 + i * PITCH} ${y(hi)}V${y(lo)}`;
  });
  const ly = y(s.last) + 0.5;
  out += `<path class="grid vertical" d="${v}"/><path class="grid" d="${hz}"/>`;
  out += `<path class="last" d="M${left} ${ly}H${right}"/><path class="bars" d="${bars}"/>`;
  out += `<rect class="frame" x="${left + 0.5}" y="${TOP + 0.5}" width="${right - left}" height="${plot}"/>`;
  out += `<path class="tick" d="${ticks}"/>${text}`;
  out += `<path class="solid" d="M${left + 6} ${TOP + 10}h10l-5 6z"/><text x="${left + 24}" y="${TOP + 17}">${s.title}</text>`;
  out += `<rect class="solid" x="${right + 2}" y="${ly - 8.5}" width="${s.axis - 7}" height="17"/>`;
  out += `<text class="tag-text" x="${right + 9}" y="${ly + 5}">${s.lastText}</text>`;
  box.innerHTML = `<svg width="${w}" height="${h}">${out}</svg>`;
}

const charts = [...document.querySelectorAll('.chart')];
charts.forEach(draw);
addEventListener('resize', () => {
  charts.forEach(c => { c.innerHTML = ''; });
  charts.forEach(draw);
});
```
